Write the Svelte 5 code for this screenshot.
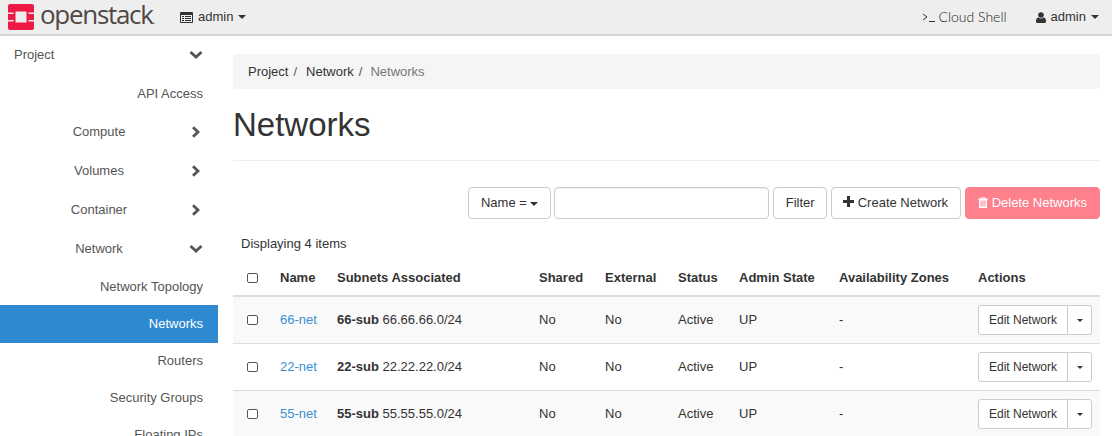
<script>
  const sideItems = [
    { label: 'Project', cls: 'top', icon: 'down' },
    { label: 'API Access', cls: 'leaf' },
    { label: 'Compute', cls: 'group', icon: 'right' },
    { label: 'Volumes', cls: 'group', icon: 'right' },
    { label: 'Container', cls: 'group', icon: 'right' },
    { label: 'Network', cls: 'group', icon: 'down' },
    { label: 'Network Topology', cls: 'sub' },
    { label: 'Networks', cls: 'sub active' },
    { label: 'Routers', cls: 'sub' },
    { label: 'Security Groups', cls: 'sub' },
    { label: 'Floating IPs', cls: 'sub' }
  ];

  const networks = [
    { name: '66-net', sub: '66-sub', cidr: '66.66.66.0/24' },
    { name: '22-net', sub: '22-sub', cidr: '22.22.22.0/24' },
    { name: '55-net', sub: '55-sub', cidr: '55.55.55.0/24' }
  ];
</script>

<header class="navbar">
  <div class="brand">
    <svg class="logo" width="26" height="26" viewBox="0 0 26 26">
      <path fill="#ed1944" fill-rule="evenodd" d="M2 0h22a2 2 0 0 1 2 2v6.500h-5.500V10H26v6h-5.500v1.500H26V24a2 2 0 0 1-2 2H2a2 2 0 0 1-2-2v-6.500h5.500V16H0v-6h5.500V8.500H0V2a2 2 0 0 1 2-2zM7.500 7.500v11h11v-11z" />
    </svg>
    <span class="wordmark">openstack<small>.</small></span>
  </div>
  <div class="project-menu">
    <svg width="13" height="11" viewBox="0 0 13 11">
      <path fill="#333" fill-rule="evenodd" d="M1 0h11a1 1 0 0 1 1 1v9a1 1 0 0 1-1 1H1a1 1 0 0 1-1-1V1a1 1 0 0 1 1-1zM1 3v7h11V3zM2 4h2v1H2zM5 4h6v1H5zM2 6h2v1H2zM5 6h6v1H5zM2 8h2v1H2zM5 8h6v1H5z" />
    </svg>
    <span>admin</span>
    <i class="caret"></i>
  </div>
  <div class="nav-right">
    <div class="shell">
      <svg width="14" height="11" viewBox="0 0 14 11">
        <path fill="none" stroke="#333" d="M1 2l4 3-4 3M7 9.500h6" />
      </svg>
      <span>Cloud Shell</span>
    </div>
    <div class="user">
      <svg width="10" height="11" viewBox="0 0 10 11">
        <circle cx="5" cy="3" r="2.800" fill="#333" />
        <path fill="#333" d="M0 9.500C0 7 1 5.500 2.500 5.500c.7.6 1.500.9 2.500.9s1.800-.3 2.500-.9C9 5.500 10 7 10 9.500 10 10.500 9.300 11 8.500 11h-7C.7 11 0 10.500 0 9.500z" />
      </svg>
      <span>admin</span>
      <i class="caret"></i>
    </div>
  </div>
</header>

<div class="page">
  <nav class="sidebar">
    {#each sideItems as item}
      <div class="item {item.cls}">
        <span class="label">{item.label}</span>
        {#if item.icon === 'right'}
          <svg class="chev right" width="10" height="12" viewBox="0 0 10 12">
            <path fill="none" stroke="#555" stroke-width="2.800" d="M2 1.200L7 6l-5 4.800" />
          </svg>
        {:else if item.icon === 'down'}
          <svg class="chev down" width="14" height="10" viewBox="0 0 14 10">
            <path fill="none" stroke="#555" stroke-width="2.800" d="M1.500 2l5.500 5 5.500-5" />
          </svg>
        {/if}
      </div>
    {/each}
  </nav>

  <main class="content">
    <ol class="breadcrumb">
      <li>Project</li>
      <li class="sep">/</li>
      <li>Network</li>
      <li class="sep">/</li>
      <li class="current">Networks</li>
    </ol>

    <h1>Networks</h1>
    <hr />

    <div class="actions">
      <button class="btn name-btn">Name = <i class="caret"></i></button>
      <input class="filter" type="text" />
      <button class="btn filter-btn">Filter</button>
      <button class="btn create-btn">
        <svg width="11" height="11" viewBox="0 0 11 11">
          <path fill="#333" d="M4 0h3v4h4v3H7v4H4V7H0V4h4z" />
        </svg>
        Create Network
      </button>
      <button class="btn danger">
        <svg class="trash" width="10" height="11" viewBox="0 0 10 11">
          <path fill="#fff" fill-rule="evenodd" d="M3.500 0h3l.7 1.500H10v1H9V11H1V2.500H0v-1h2.800zM4 .8l-.3.7h2.600L6 .8zM2.500 3.500v6h1v-6zM4.500 3.500v6h1v-6zM6.500 3.500v6h1v-6z" />
        </svg>
        Delete Networks
      </button>
    </div>

    <table>
      <colgroup>
        <col style="width: 39px" />
        <col style="width: 57px" />
        <col style="width: 202px" />
        <col style="width: 66px" />
        <col style="width: 73px" />
        <col style="width: 61px" />
        <col style="width: 100px" />
        <col style="width: 139px" />
        <col style="width: 130px" />
      </colgroup>
      <thead>
        <tr class="count"><th colspan="9">Displaying 4 items</th></tr>
        <tr class="heads">
          <th class="check"><span class="box"></span></th>
          <th>Name</th>
          <th>Subnets Associated</th>
          <th>Shared</th>
          <th>External</th>
          <th>Status</th>
          <th>Admin State</th>
          <th>Availability Zones</th>
          <th>Actions</th>
        </tr>
      </thead>
      <tbody>
        {#each networks as net}
          <tr>
            <td class="check"><span class="box"></span></td>
            <td><a href="#top">{net.name}</a></td>
            <td><b>{net.sub}</b> {net.cidr}</td>
            <td>No</td>
            <td>No</td>
            <td>Active</td>
            <td>UP</td>
            <td>-</td>
            <td>
              <div class="split">
                <button class="edit">Edit Network</button>
                <button class="drop"><i class="caret"></i></button>
              </div>
            </td>
          </tr>
        {/each}
      </tbody>
    </table>
  </main>
</div>

<style>
  :global(body) {
    margin: 0;
    height: 436px;
    overflow: hidden;
    background: #fff;
    color: #333;
    font-family: "Liberation Sans", Arial, sans-serif;
    font-size: 13px;
    line-height: 18px;
  }

  .caret {
    display: inline-block;
    width: 0;
    height: 0;
    border-top: 4px solid #333;
    border-left: 4px solid transparent;
    border-right: 4px solid transparent;
    vertical-align: middle;
  }

  .navbar {
    display: flex;
    align-items: center;
    height: 34px;
    background: #eeeeee;
    border-bottom: 2px solid #d4d4d4;
  }

  .brand {
    display: flex;
    align-items: center;
    flex: none;
    width: 180px;
    padding-left: 8px;
    box-sizing: border-box;
  }

  .logo {
    flex: none;
  }

  .wordmark {
    margin-left: 6px;
    font-family: "Open Sans", sans-serif;
    font-size: 26px;
    font-weight: 500;
    line-height: 30px;
    letter-spacing: -1.300px;
    color: #4f4845;
  }

  .wordmark small {
    font-size: 10px;
    color: #777;
  }

  .project-menu {
    display: flex;
    align-items: center;
    gap: 5px;
  }

  .nav-right {
    display: flex;
    align-items: center;
    margin-left: auto;
    padding-right: 13px;
  }

  .shell {
    display: flex;
    align-items: center;
    gap: 2px;
    margin-right: 29px;
    font-family: "Lato", sans-serif;
    font-size: 14px;
    font-weight: 300;
    color: #222;
  }

  .user {
    display: flex;
    align-items: center;
    gap: 5px;
  }

  .page {
    display: flex;
  }

  .sidebar {
    flex: none;
    width: 218px;
    color: #555;
  }

  .item {
    position: relative;
    display: flex;
    align-items: center;
    box-sizing: border-box;
    height: 37px;
    padding-right: 15px;
  }

  .top {
    height: 38px;
    padding-left: 14px;
    padding-bottom: 1px;
  }

  .leaf {
    height: 38px;
    padding-top: 1px;
    justify-content: flex-end;
  }

  .group {
    height: 39px;
    justify-content: center;
    padding-right: 20px;
  }

  .sub {
    justify-content: flex-end;
  }

  .active {
    height: 38px;
    margin-bottom: -1px;
    background: #2d89d0;
    color: #fff;
  }

  .chev {
    position: absolute;
    top: 50%;
    transform: translateY(-50%);
  }

  .right {
    right: 17px;
  }

  .down {
    right: 15px;
  }

  .content {
    flex: 1;
    min-width: 0;
    padding: 18px 12px 0 15px;
  }

  .breadcrumb {
    display: flex;
    align-items: center;
    gap: 5px;
    height: 35px;
    margin: 0;
    padding: 0 15px;
    list-style: none;
    background: #f5f5f5;
    border-radius: 4px;
  }

  .breadcrumb .sep {
    color: #555;
    margin-right: 4px;
  }

  .current {
    margin-left: -1px;
    color: #777;
  }

  h1 {
    margin: 18px 0 17px;
    font-size: 33px;
    font-weight: 400;
    line-height: 36px;
    color: #333;
  }

  hr {
    margin: 0 0 26px;
    border: 0;
    border-top: 1px solid #eeeeee;
  }

  .actions {
    display: flex;
    justify-content: flex-end;
    gap: 4px;
    height: 32px;
  }

  .btn {
    box-sizing: border-box;
    height: 32px;
    padding: 0 12px;
    font: inherit;
    color: #333;
    background: #fff;
    border: 1px solid #ccc;
    border-radius: 4px;
  }

  .name-btn {
    width: 83px;
    margin-right: -1px;
    padding: 0;
  }

  .filter-btn {
    padding: 0 11.500px;
  }

  .create-btn {
    padding-left: 11px;
  }

  .filter {
    box-sizing: border-box;
    width: 215px;
    height: 32px;
    padding: 0 12px;
    background: #fff;
    border: 1px solid #ccc;
    border-radius: 4px;
    box-shadow: inset 0 1px 1px rgba(0, 0, 0, 0.075);
  }

  .danger {
    color: #fff;
    background: #fd808d;
    border-color: #fd808d;
  }

  .trash {
    vertical-align: -1px;
  }

  table {
    width: 867px;
    margin-top: 6px;
    border-collapse: collapse;
    table-layout: fixed;
  }

  th {
    padding: 0 8px;
    text-align: left;
    font-weight: 700;
  }

  .count th {
    box-sizing: border-box;
    height: 35px;
    padding-top: 3px;
    font-weight: 400;
  }

  .heads th {
    height: 35px;
    border-bottom: 2px solid #dddddd;
  }

  .heads th.check {
    padding: 0 0 0 14px;
  }

  td {
    height: 46px;
    padding: 0 8px;
    border-bottom: 1px solid #dddddd;
  }

  tbody tr:nth-child(odd) {
    background: #f9f9f9;
  }

  .check {
    padding: 0 0 0 14px;
    line-height: 0;
  }

  .box {
    display: inline-block;
    box-sizing: border-box;
    width: 11px;
    height: 10px;
    border: 1.500px solid #555;
    border-radius: 2px;
    background: #fff;
  }

  a {
    color: #3b8fd1;
    text-decoration: none;
  }

  .split {
    display: flex;
  }

  .split button {
    box-sizing: border-box;
    height: 30px;
    background: #fff;
    border: 1px solid #ccc;
    color: #333;
    font-family: inherit;
    font-size: 12px;
  }

  .edit {
    width: 90px;
    padding: 0;
    border-radius: 3px 0 0 3px;
  }

  .split .drop {
    width: 25px;
    padding: 0;
    margin-left: -1px;
    border-radius: 0 3px 3px 0;
  }

  .drop .caret {
    border-top-width: 3.500px;
    border-left-width: 3.500px;
    border-right-width: 3.500px;
  }
</style>
